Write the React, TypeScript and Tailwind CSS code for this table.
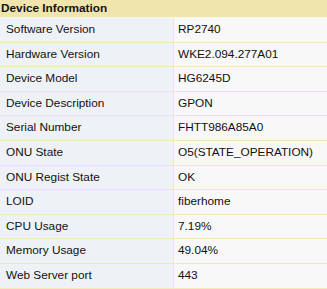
import React from 'react';

const rows: [string, string][] = [
    ['Software Version', 'RP2740'],
    ['Hardware Version', 'WKE2.094.277A01'],
    ['Device Model', 'HG6245D'],
    ['Device Description', 'GPON'],
    ['Serial Number', 'FHTT986A85A0'],
    ['ONU State', 'O5(STATE_OPERATION)'],
    ['ONU Regist State', 'OK'],
    ['LOID', 'fiberhome'],
    ['CPU Usage', '7.19%'],
    ['Memory Usage', '49.04%'],
    ['Web Server port', '443'],
];

export default function App() {
    return (
        <div className="w-[327px] h-[289px] overflow-hidden bg-white text-[11.8px] text-[#111]" style={{ fontFamily: 'Arial, "Liberation Sans", sans-serif' }}>
            {/* Header */}
            <div className="h-[17px] bg-[#f1e5ae] pl-px font-bold leading-[17px]">Device Information</div>
            <div className="h-px bg-[#fbf6e2]" />
            {rows.map(([label, value]) => (
                <div key={label} className="grid grid-cols-[173px_1fr] h-[24.6px] border-b border-[#f3e8bc]">
                    <div className="bg-[#eef1f5] pl-[6px] flex items-center">{label}</div>
                    <div className="bg-[#f8f8f8] border-l border-[#f3e8bc] pl-[4px] flex items-center">{value}</div>
                </div>
            ))}
        </div>
    );
}
